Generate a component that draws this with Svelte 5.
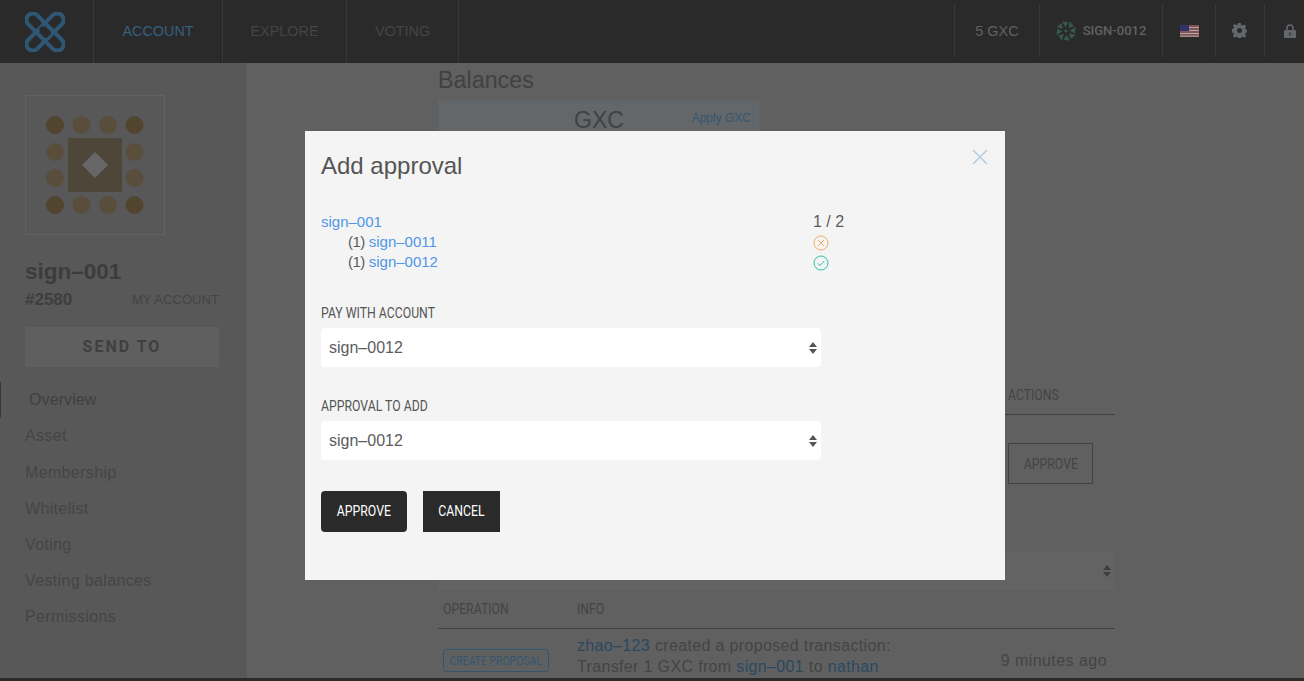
<script>
  const nav = ['ACCOUNT', 'EXPLORE', 'VOTING'];
  const menu = ['Overview', 'Asset', 'Membership', 'Whitelist', 'Voting', 'Vesting balances', 'Permissions'];
  const dots = [55, 81.5, 108, 134.5];
  const rows = [125, 152, 178, 205];
  const approvers = [
    { name: 'sign–0011', ok: false },
    { name: 'sign–0012', ok: true }
  ];
  const blades = [0, 45, 90, 135, 180, 225, 270, 315];
</script>

<div class="page">
  <header class="topbar">
    <a class="logo" href="#top" aria-label="home">
      <svg width="40" height="40" viewBox="0 0 44 44" fill="none" stroke="#2f5672" stroke-width="4.4">
        <rect x="-4" y="15" width="52" height="14" rx="7" transform="rotate(45 22 22)" />
        <rect x="-4" y="15" width="52" height="14" rx="7" transform="rotate(-45 22 22)" />
        <path d="M17 17l5 5" stroke="#2a2a2a" stroke-width="5" />
        <path d="M22 27l5-5" stroke="#2a2a2a" stroke-width="5" />
      </svg>
    </a>
    <nav class="nav">
      {#each nav as item, i}
        <a class="nav-item" class:active={i === 0} href="#top">{item}</a>
      {/each}
    </nav>
    <div class="spacer"></div>
    <div class="tool balance">5 GXC</div>
    <div class="tool account">
      <svg width="20" height="20" viewBox="0 0 20 20" fill="#36594b">
        {#each blades as deg}
          <path d="M6 0.3l6.4 1-3 5z" transform="rotate({deg} 10 10)" />
        {/each}
        <circle cx="10" cy="10" r="1.6" />
      </svg>
      <span>SIGN-0012</span>
    </div>
    <div class="tool flag-cell">
      <svg width="19" height="12" viewBox="0 0 19 12">
        <rect width="19" height="12" fill="#7f5556" />
        <path d="M0 2.5h19M0 5.5h19M0 8.5h19M0 11.2h19" stroke="#b3a4a4" stroke-width="1" />
        <rect width="9" height="6" fill="#33336a" />
      </svg>
    </div>
    <div class="tool gear">
      <svg width="15" height="15" viewBox="0 0 15 15" fill="#63666a">
        <path fill-rule="evenodd" d="M6.2 0h2.6l.4 2 1.3.6 1.8-1.1 1.8 1.8-1.1 1.8.6 1.3 2 .4v2.6l-2 .4-.6 1.3 1.1 1.8-1.8 1.8-1.8-1.1-1.3.6-.4 2H6.2l-.4-2-1.3-.6-1.8 1.1-1.8-1.8 1.1-1.8-.6-1.3-2-.4V6.2l2-.4.6-1.3-1.1-1.8 1.8-1.8 1.8 1.1 1.3-.6zM7.5 5a2.5 2.5 0 1 0 0 5 2.5 2.5 0 0 0 0-5z" />
      </svg>
    </div>
    <div class="tool lock">
      <svg width="12" height="14" viewBox="0 0 12 14">
        <path d="M3 6.5V4a3 3 0 0 1 6 0v2.5" fill="none" stroke="#63666a" stroke-width="1.6" />
        <rect y="6" width="12" height="8" rx="1" fill="#63666a" />
        <rect x="5.3" y="8.5" width="1.4" height="3" fill="#333" />
      </svg>
    </div>
  </header>

  <div class="body">
    <aside class="sidebar">
      <div class="profile">
        <div class="avatar">
          <svg width="140" height="140" viewBox="25 95 140 140">
            {#each rows as y, r}
              {#each dots as x, c}
                {#if r === 0 || r === 3 || c === 0 || c === 3}
                  <circle cx={x} cy={y} r="9" fill={(r === 0 || r === 3) && (c === 0 || c === 3) ? '#524530' : '#594e3c'} />
                {/if}
              {/each}
            {/each}
            <rect x="68" y="138" width="54" height="54" fill="#4e4638" />
            <path d="M95 152l13 13-13 13-13-13z" fill="#666" />
          </svg>
        </div>
        <h2>sign–001</h2>
        <div class="id-row">
          <span class="acc-id">#2580</span>
          <span class="mine">MY ACCOUNT</span>
        </div>
        <div class="send">SEND TO</div>
      </div>
      <ul class="menu">
        {#each menu as item, i}
          <li class:current={i === 0}>{item}</li>
        {/each}
      </ul>
    </aside>

    <main class="content">
      <h3>Balances</h3>
      <div class="balance-box">
        <span class="coin">GXC</span>
        <span class="apply">Apply GXC</span>
      </div>

      <div class="proposals">
        <div class="prop-head"><span class="narrow">ACTIONS</span></div>
        <div class="prop-row"><span class="approve-outline"><span class="narrow">APPROVE</span></span></div>
      </div>

      <div class="filter"><span class="updown"><i></i><b></b></span></div>

      <div class="history-head">
        <span class="col-op"><span class="narrow">OPERATION</span></span>
        <span class="narrow">INFO</span>
      </div>
      <div class="history-row">
        <div class="col-op"><span class="tag"><span class="narrow">CREATE PROPOSAL</span></span></div>
        <div class="info">
          <div><span class="dim-link">zhao–123</span> created a proposed transaction:</div>
          <div>Transfer 1 GXC from <span class="dim-link">sign–001</span> to <span class="dim-link">nathan</span></div>
        </div>
        <div class="when">9 minutes ago</div>
      </div>
    </main>
  </div>
  <div class="footer"></div>

  <div class="modal" role="dialog">
    <svg class="close" width="16" height="16" viewBox="0 0 16 16" stroke="#b3cce3" stroke-width="1.5">
      <path d="M1 1l14 14M15 1L1 15" />
    </svg>
    <h1>Add approval</h1>

    <div class="tree">
      <div class="tree-names">
        <div><a href="#top">sign–001</a></div>
        {#each approvers as a}
          <div class="sub"><span class="weight">(1)</span> <a href="#top">{a.name}</a></div>
        {/each}
      </div>
      <div class="tree-state">
        <div class="count">1 / 2</div>
        {#each approvers as a}
          <div class="state">
            {#if a.ok}
              <svg width="16" height="16" viewBox="0 0 16 16" fill="none" stroke="#2fc3a3" stroke-width="1">
                <circle cx="8" cy="8" r="7" />
                <path d="M4.6 8.2l2.4 2.3 4.4-4.6" />
              </svg>
            {:else}
              <svg width="16" height="16" viewBox="0 0 16 16" fill="none" stroke="#f5ac66" stroke-width="1">
                <circle cx="8" cy="8" r="7" />
                <path d="M5 5l6 6M11 5l-6 6" />
              </svg>
            {/if}
          </div>
        {/each}
      </div>
    </div>

    <label class="field-label first" for="pay"><span class="narrow">PAY WITH ACCOUNT</span></label>
    <div class="select" id="pay">sign–0012 <span class="updown"><i></i><b></b></span></div>

    <label class="field-label" for="add"><span class="narrow">APPROVAL TO ADD</span></label>
    <div class="select" id="add">sign–0012 <span class="updown"><i></i><b></b></span></div>

    <div class="buttons">
      <button class="primary"><span class="narrow">APPROVE</span></button>
      <button class="secondary"><span class="narrow">CANCEL</span></button>
    </div>
  </div>
</div>

<style>
  :global(body) { margin: 0; background: #606060; }
  .page {
    height: 681px; overflow: hidden; display: flex; flex-direction: column; position: relative;
    font-family: "Liberation Sans", Arial, sans-serif; color: #404040; font-size: 16px;
  }
  .narrow { display: inline-block; transform: scaleX(.875); white-space: nowrap; }

  .topbar { height: 63px; flex: none; display: flex; background: #2a2a2a; }
  .logo { width: 94px; display: flex; align-items: center; padding-left: 25px; box-sizing: border-box; border-right: 1px solid #393939; }
  .nav { display: grid; grid-template-columns: 129px 124px 112px; }
  .nav-item {
    display: flex; align-items: center; justify-content: center; box-sizing: border-box;
    height: 62px; border-right: 1px solid #393939;
    font-size: 14.4px; color: #454545; text-decoration: none;
  }
  .nav-item.active { color: #35607f; }
  .spacer { flex: 1; }
  .tool {
    height: 53px; margin-top: 4px; border-left: 1px solid #393939; box-sizing: border-box;
    display: flex; align-items: center; justify-content: center; color: #616161;
  }
  .balance { width: 85px; font-size: 14.5px; }
  .account { width: 123px; gap: 7px; font-family: Roboto, sans-serif; font-size: 13px; font-weight: 500; }
  .flag-cell { width: 53px; }
  .gear { width: 49px; padding-right: 2px; }
  .lock { width: 40px; justify-content: flex-start; padding-left: 19px; }

  .body { flex: 1; display: flex; min-height: 0; }
  .sidebar { width: 247px; flex: none; background: #585858; border-right: 1px solid #5b5b5b; box-sizing: border-box; }
  .profile { padding: 32px 27px 15px 25px; }
  .avatar { width: 140px; height: 140px; box-sizing: border-box; border: 1px solid #636363; }
  .avatar svg { display: block; margin: -1px; }
  h2 { margin: 24px 0 0; font-size: 22.5px; line-height: 26px; font-weight: 700; color: #3c3c3c; }
  .id-row { display: flex; justify-content: space-between; align-items: center; margin-top: 5px; height: 20px; }
  .acc-id { font-weight: 700; font-size: 17px; color: #3e3e3e; }
  .mine { font-size: 13.1px; color: #444; margin-bottom: 1px; }
  .send {
    margin-top: 17px; height: 40px; line-height: 40px; text-align: center; background: #5f5f5f;
    font-family: Roboto, sans-serif; font-weight: 700; font-size: 16px; letter-spacing: 2px; color: #3f3f3f;
  }
  .menu { list-style: none; margin: 0; padding: 0; }
  .menu li {
    height: 36px; line-height: 35px; box-sizing: border-box; padding-left: 25px;
    border-bottom: 1px solid #565656; color: #454545; letter-spacing: .35px;
  }
  .menu li:nth-child(2) { height: 37px; }
  .menu li.current { padding-left: 28px; border-left: 1px solid #363636; color: #404040; letter-spacing: .1px; }

  .content { flex: 1; padding: 0 189px 0 191px; min-width: 0; }
  h3 { margin: 3px 0 0; font-size: 23.3px; line-height: 28px; font-weight: 400; color: #414141; }
  .balance-box {
    margin-top: 6px; width: 322px; height: 100px; background: #64676a; border: 1px solid #606367; box-sizing: border-box;
    display: flex; justify-content: center; position: relative;
  }
  .coin { font-size: 23px; line-height: 38px; color: #414141; }
  .apply { position: absolute; right: 8px; top: 10px; font-size: 12px; color: #33566f; }

  .proposals { margin-top: 179px; }
  .prop-head {
    height: 35px; line-height: 32px; padding-left: 570px; border-bottom: 1px solid #404040;
    font-family: Roboto, sans-serif; font-size: 14px; color: #444;
  }
  .prop-head .narrow, .history-head .narrow, .field-label .narrow { transform-origin: left center; }
  .prop-row { padding: 28px 0 0 570px; }
  .approve-outline {
    display: block; width: 85px; height: 41px; line-height: 41px; box-sizing: border-box; text-align: center;
    border: 1px solid #424242; font-family: Roboto, sans-serif; font-size: 14px; color: #444;
  }
  .filter { margin-top: 67px; height: 39px; background: #636363; position: relative; }
  .history-head {
    margin-top: 9px; height: 29px; line-height: 21px; display: flex; border-bottom: 1px solid #404040;
    font-family: Roboto, sans-serif; font-size: 14px; color: #444;
  }
  .col-op { width: 139px; padding-left: 5px; box-sizing: border-box; }
  .history-row { display: flex; align-items: center; padding-top: 6px; line-height: 21px; color: #444; letter-spacing: .35px; }
  .tag {
    display: flex; justify-content: center; width: 106px; height: 23px; line-height: 22px; margin-top: 9px; box-sizing: border-box;
    border: 1px solid #33566f; border-radius: 3px; font-family: Roboto, sans-serif; font-size: 13px; letter-spacing: 0; color: #33566f;
  }
  .tag .narrow { transform: scaleX(.8); }
  .info { flex: 1; }
  .dim-link { color: #2b485f; }
  .when { padding-right: 8px; margin-top: 9px; letter-spacing: .45px; }

  .footer { height: 3px; flex: none; background: #2a2a2a; }

  .modal {
    position: absolute; left: 305px; top: 131px; width: 700px; height: 449px; box-sizing: border-box;
    padding: 18px 16px; background: #f4f4f4;
  }
  .close { position: absolute; right: 17px; top: 18px; }
  h1 { margin: 0; font-size: 24px; line-height: 34px; font-weight: 400; color: #555; }
  .tree { width: 500px; margin-top: 29px; font-size: 15px; line-height: 20px; color: #5c5c5c; position: relative; }
  .tree a { color: #4f97e8; text-decoration: none; }
  .sub { padding-left: 27px; }
  .sub .weight { letter-spacing: -.6px; }
  .tree-state { position: absolute; left: 492px; top: 0; white-space: nowrap; font-size: 16px; }
  .state { height: 20px; display: flex; align-items: center; padding-top: 2px; box-sizing: border-box; }
  .field-label {
    display: block; margin-top: 29px; line-height: 20px;
    font-family: Roboto, sans-serif; font-size: 14px; color: #555;
  }
  .field-label.first { margin-top: 31px; }
  .select {
    width: 500px; height: 39px; margin-top: 5px; padding: 0 8px; box-sizing: border-box; position: relative;
    background: #fff; border-radius: 4px; line-height: 39px; color: #5c5c5c;
  }
  .updown { position: absolute; right: 4px; top: 14px; width: 8px; display: flex; flex-direction: column; gap: 2px; }
  .updown i { border: 4px solid transparent; border-top: 0; border-bottom: 5px solid #555; }
  .updown b { border: 4px solid transparent; border-bottom: 0; border-top: 5px solid #555; }
  .filter .updown i { border-bottom-color: #3e3e3e; }
  .filter .updown b { border-top-color: #3e3e3e; }
  .buttons { display: flex; gap: 16px; margin-top: 31px; }
  button {
    height: 41px; border: 0; background: #2a2a2a; color: #fff; padding: 0 0 2px;
    font-family: Roboto, sans-serif; font-size: 14px;
  }
  .primary { width: 86px; border-radius: 4px; }
  .secondary { width: 77px; }
</style>
